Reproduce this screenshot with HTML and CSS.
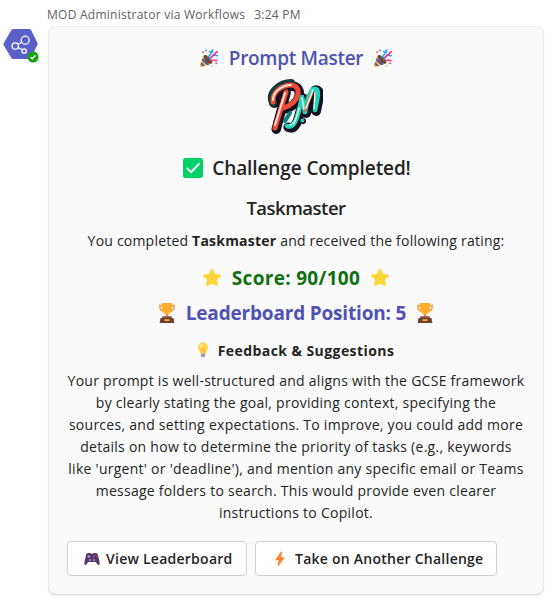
FILE: index.html
```html
<!DOCTYPE html>
<html lang="en">
<head>
<meta charset="utf-8">
<title>Prompt Master</title>
<link rel="stylesheet" href="styles.css">
</head>
<body>
<svg class="defs" width="0" height="0" aria-hidden="true">
  <symbol id="party" viewBox="0 0 20 20">
    <path d="M4.500 7.500 13 15.500 2 19Q.6 19.200.9 17.800Z" fill="#fbb83b"/>
    <path d="m3.700 10 7 6.300-2.600.9-5.200-4.800ZM2.200 14.300l3.800 3.500-2 .6-2.400-2.200Z" fill="#5459a6"/>
    <ellipse cx="9" cy="11.300" rx="2.600" ry="5.600" transform="rotate(-45 9 11.300)" fill="#704437"/>
    <path d="M8.800 9.200c3-2.400 4-4.700 1.600-5.700M10.800 11.500c1.200-3.500 4-5 7.500-3.800" fill="none" stroke="#25a9f3" stroke-width="1.500" stroke-linecap="round"/>
    <path d="m12 2.300 2.500-1.200-.5 4-2 .5Z" fill="#26a9f2"/>
    <path d="M12 9.600c1.600-.9 1.300-3 3.100-3s.8-2.600 3.200-2.700M12.500 12.400c2-1.100 3.500.3 5.400.1" fill="none" stroke="#f92f83" stroke-width="1.600" stroke-linecap="round"/>
    <circle cx="4.200" cy="4.200" r="1.100" fill="#ff6b55"/><circle cx="17.200" cy="15.200" r="1" fill="#f53c83"/><circle cx="13.500" cy="17.800" r=".9" fill="#ffba45"/><circle cx="7" cy="2.500" r=".9" fill="#1598ef"/>
  </symbol>
  <symbol id="star" viewBox="0 0 20 20">
    <path d="m10 1.800 2.500 5 5.600.8-4.100 4 1 5.600-5-2.700-5 2.700 1-5.600-4.100-4 5.600-.8Z" fill="#ffd53d" stroke="#ffd53d" stroke-width="2" stroke-linejoin="round"/>
  </symbol>
  <symbol id="trophy" viewBox="0 0 16 20">
    <path d="M4 2.500H.8Q.6 8 5.500 8.700M12 2.500h3.200Q15.400 8 10.500 8.700" fill="none" stroke="#f5952a" stroke-width="1.300"/>
    <path d="M6.800 10h2.400v5H6.800Z" fill="#e88725"/>
    <path d="M3 0h10v5.500Q13 10.500 8 11.700 3 10.500 3 5.500Z" fill="#ffad2e"/>
    <path d="M3.500 13.300h9l.7 2.200H2.800Z" fill="#8c5543"/>
    <path d="M1.500 15h13l.8 5H.7Z" fill="#6d4034"/>
    <rect x="5.500" y="16.200" width="5" height="1.800" rx=".4" fill="#ffb12f"/>
  </symbol>
  <symbol id="bulb" viewBox="0 0 12 16">
    <path d="M3.800 10h4.400v4Q8 15.600 6 15.600T3.800 14Z" fill="#b2adb5"/>
    <path d="M6 .5A4.900 4.900 0 0 0 1 5.400C1 8.200 3.200 9 3.500 11.500h5C8.800 9 11 8.200 11 5.400A4.900 4.900 0 0 0 6 .5Z" fill="#ffd447"/>
    <path d="M5 10.800 4.400 7h3.200L7 10.800" fill="none" stroke="#f7a92e" stroke-width=".8"/>
    <ellipse cx="4.400" cy="3.700" rx="1.700" ry="2" fill="#ffec91"/>
    <path d="M4 13h4" stroke="#827c87" stroke-width=".8"/>
  </symbol>
</svg>
<main class="message">
  <div class="avatar">
    <svg width="36" height="33" viewBox="0 0 36 33">
      <path d="M10.200 1h16q1.200 0 1.800 1l6.400 12.800q.5 1 0 2L28 30q-.6 1-1.800 1H10.200q-1.200 0-1.800-1L.7 17.300q-.6-1 0-2L8.400 2q.6-1 1.800-1Z" fill="#5b5fc7"/>
      <g fill="none" stroke="#fff" stroke-width="1.300"><circle cx="22.200" cy="12.200" r="4"/><circle cx="12.300" cy="18" r="3.200"/><circle cx="21.200" cy="23" r="2.200"/><path d="m15.100 16.300 3.600-2M15.100 19.500l4.200 2.300"/></g>
    </svg>
    <svg class="presence" width="12" height="12" viewBox="0 0 12 12"><circle cx="6" cy="6" r="5.500" fill="#13a10e"/><path d="m3.600 6.200 1.600 1.500L8.400 4.500" fill="none" stroke="#fff" stroke-width="1.400"/></svg>
  </div>
  <div class="content">
    <div class="meta"><span class="sender">MOD Administrator via Workflows</span><span class="time">3:24 PM</span></div>
    <article class="card">
      <h1 class="row title"><svg class="i20"><use href="#party"/></svg><span>Prompt Master</span><svg class="i20"><use href="#party"/></svg></h1>
      <svg class="logo" viewBox="0 0 56 58">
        <g fill="none" stroke-linecap="round" stroke-linejoin="round">
          <g stroke="#140e22" stroke-width="9.500" transform="translate(1.200 1.200)"><path d="M18 12 8 49M6 23C5 12 16 6 24 6c11 0 10 18-8 23"/><path d="M20 47c9 4 11-12 15-29l3 15 9-23c6-1 4 7 1 21"/></g>
          <path d="M6 24C1 13 14 4 24 4" stroke="#123b40" stroke-width="8"/>
          <path d="M20 47c9 3 11-12 15-29l3 15c2-12 5-22 9-23 6-1 4 7 1 21" stroke="#25d5b9" stroke-width="4.600"/>
          <path d="M19 13 8 49M6 23C5 12 16 6 24 6c11 0 10 18-8 23" stroke="#ee4a38" stroke-width="5"/>
          <path d="M18 14 8 46M6 21C6 12 16 6 24 6" stroke="#ffe5d0" stroke-width="2"/>
          <path d="m38 31 7-17" stroke="#ef5a45" stroke-width="3"/>
          <path d="m35 19 2 11M46 11l-7 18M23 46c5 0 7-9 9-17M48 13l-1 16" stroke="#dffff0" stroke-width="1.500"/>
          <path d="m23 34-5 8" stroke="#167a78" stroke-width="4"/>
        </g><circle cx="36" cy="42" r="3" fill="#140e22"/><circle cx="35.500" cy="41.500" r="1.900" fill="#25d5b9"/>
      </svg>
      <h2 class="row completed"><svg class="i20" viewBox="0 0 20 20"><rect width="20" height="20" rx="2.500" fill="#00d26a"/><path d="m4.300 10.500 3.800 3.700 7.800-8.300" fill="none" stroke="#fff" stroke-width="2" stroke-linecap="round" stroke-linejoin="round"/></svg><span>Challenge Completed!</span></h2>
      <h2 class="row task">Taskmaster</h2>
      <p class="row rating"><span>You completed <b>Taskmaster</b> and received the following rating:</span></p>
      <div class="row score"><svg class="i20"><use href="#star"/></svg><span>Score: 90/100</span><svg class="i20"><use href="#star"/></svg></div>
      <div class="row position"><svg class="cup"><use href="#trophy"/></svg><span>Leaderboard Position: 5</span><svg class="cup"><use href="#trophy"/></svg></div>
      <h3 class="row feedback"><svg class="bulb"><use href="#bulb"/></svg><span>Feedback &amp; Suggestions</span></h3>
      <p class="advice">Your prompt is well-structured and aligns with the GCSE framework<br>by clearly stating the goal, providing context, specifying the<br>sources, and setting expectations. To improve, you could add more<br>details on how to determine the priority of tasks (e.g., keywords<br>like 'urgent' or 'deadline'), and mention any specific email or Teams<br>message folders to search. This would provide even clearer<br>instructions to Copilot.</p>
      <div class="actions">
        <button class="view"><svg width="16" height="14" viewBox="0 0 16 14"><path d="M4.300 1h2l.7.7h2L9.700 1h2q1.700 0 2.300 2l1.600 7.500q.3 2.500-1.300 2.500-1 0-2.300-3H4q-1.300 3-2.300 3Q.1 13 .4 10.500L2 3Q2.600 1 4.300 1Z" fill="#533566"/><path d="M4.800 3v3M3.300 4.500h3" stroke="#b49bd0" stroke-width="1"/><circle cx="6" cy="8" r="1.200" fill="#9b87bd"/><circle cx="10" cy="8" r="1.200" fill="#9b87bd"/><circle cx="11.500" cy="3" r=".8" fill="#f8312f"/><circle cx="10" cy="4.500" r=".8" fill="#3f9cf0"/><circle cx="13" cy="4.500" r=".8" fill="#e94a50"/></svg><span>View Leaderboard</span></button>
        <button class="take"><svg width="10" height="16" viewBox="0 0 10 16"><path d="M5.800.7.600 8.500q-.3.700.4.700h2.700L2.700 15q.2.700.7.200l6-8.300q.2-.6-.5-.6H6.200L7 1Q6.500 0 5.800.7Z" fill="#ff822d"/></svg><span>Take on Another Challenge</span></button>
      </div>
    </article>
  </div>
</main>
</body>
</html>
```
FILE: styles.css
```css
* { box-sizing: border-box; }
body { margin: 0; background: #fff; color: #242424; font-family: "Open Sans", "Noto Sans", sans-serif; font-size: 14px; }
h1, h2, h3, p { margin: 0; }
.defs { position: absolute; }
.message { display: flex; width: 557px; height: 604px; overflow: hidden; }
.avatar { position: relative; flex: 0 0 49px; padding: 28px 0 0 3px; }
.avatar svg { display: block; }
.avatar .presence { position: absolute; left: 27px; top: 51px; }
.content { width: 494px; }
.meta { display: flex; gap: 9px; height: 27px; margin-left: -2px; padding-top: 6px; color: #616161; font-size: 12px; line-height: 17px; letter-spacing: .26px; white-space: nowrap; }
.card { width: 494px; height: 567px; padding: 13px 18px 0; border-radius: 6px; background: #fafafa; box-shadow: 0 0 2px rgba(0,0,0,.2), 0 1px 2px rgba(0,0,0,.14); }
.row { display: flex; align-items: center; justify-content: center; white-space: nowrap; }
.i20 { width: 20px; height: 20px; flex: none; }
.title { height: 36px; gap: 10px; color: #4f52b2; font-size: 19px; font-weight: 600; letter-spacing: -.3px; }
.logo { display: block; width: 56px; height: 58px; margin: 3px auto 0; position: relative; left: -1px; }
.completed { height: 40px; margin-top: 11px; padding-left: 2px; gap: 9px; font-size: 19px; font-weight: 600; letter-spacing: -.1px; }
.task { height: 38px; font-size: 18.5px; font-weight: 600; letter-spacing: -.5px; }
.rating { height: 28px; letter-spacing: .21px; }
.score { height: 44px; margin-top: 2px; gap: 10px; color: #107010; font-size: 19px; font-weight: 700; letter-spacing: .3px; }
.position { height: 26px; gap: 11px; color: #4f52b2; font-size: 19px; font-weight: 700; letter-spacing: -.18px; }
.cup { width: 16px; height: 20px; }
.bulb { width: 12px; height: 16px; }
.feedback { height: 50px; margin-top: -1px; padding-right: 1px; gap: 9px; font-size: 14px; font-weight: 700; letter-spacing: .43px; }
.advice { margin: -5px -10px 0; line-height: 22px; letter-spacing: .27px; text-align: center; white-space: nowrap; }
.actions { display: flex; gap: 8px; margin-top: 17px; }
button { display: flex; align-items: center; height: 35px; padding: 0 0 0 16px; border: 1px solid #d1d1d1; border-radius: 4px; background: #fff; color: #242424; font: 600 14px "Open Sans", "Noto Sans", sans-serif; letter-spacing: .25px; white-space: nowrap; }
.view { width: 180px; gap: 6px; }
.take { width: 242px; padding-left: 19px; gap: 10px; }
```
